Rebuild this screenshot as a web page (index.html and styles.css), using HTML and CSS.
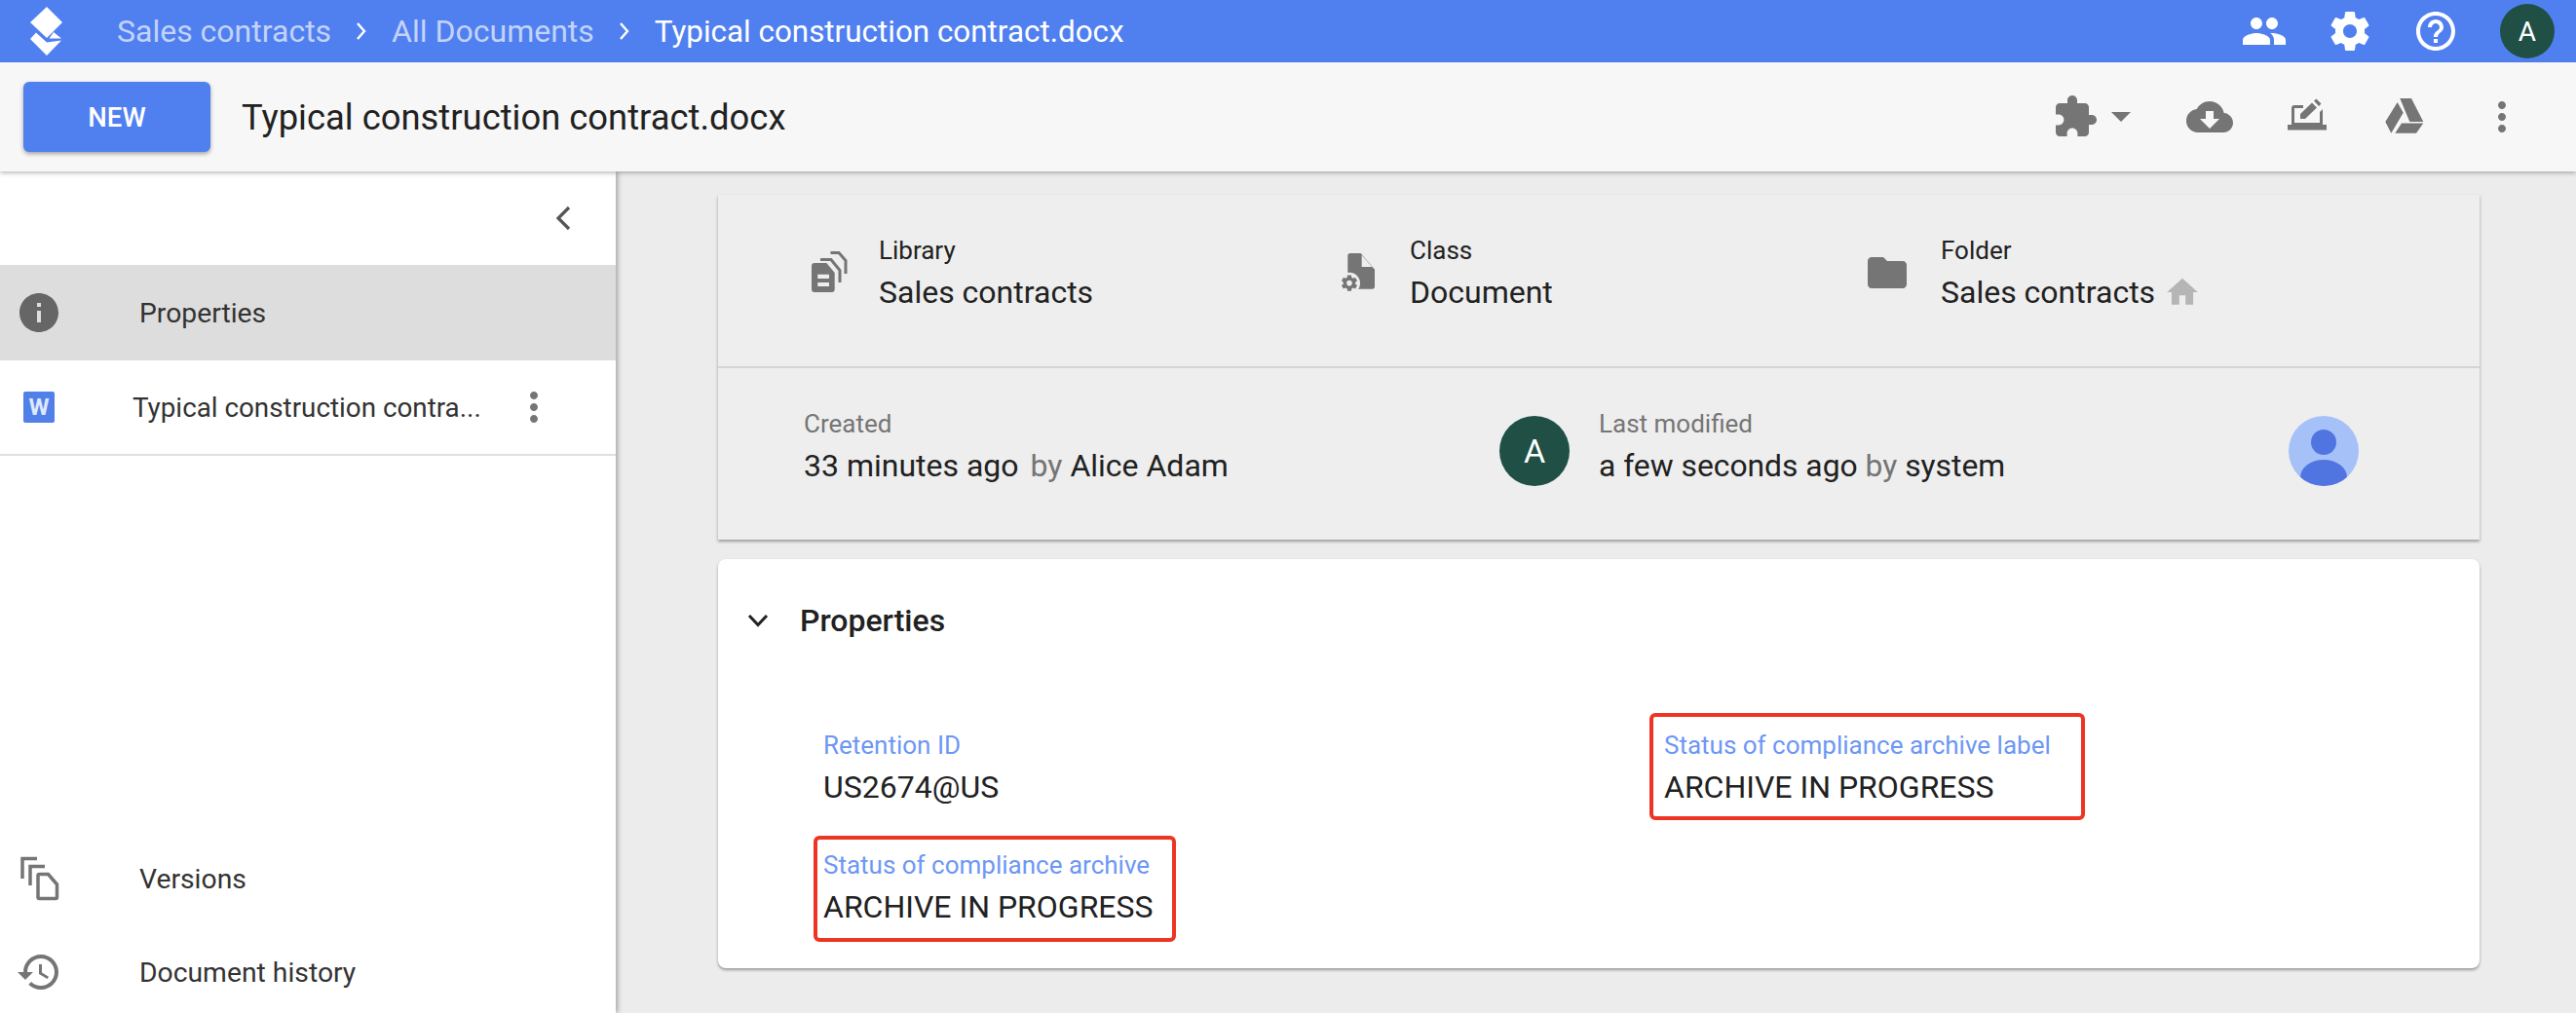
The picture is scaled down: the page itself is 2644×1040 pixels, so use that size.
FILE: index.html
```html
<!DOCTYPE html>
<html lang="en">
<head>
<meta charset="utf-8">
<title>Typical construction contract.docx</title>
<link rel="stylesheet" href="styles.css">
</head>
<body>
<header class="topbar">
  <svg class="logo" viewBox="0 0 34 50" width="34" height="50"><path d="M17 0L33 16 17 32 0 16z" fill="#fff"/><path d="M24 26L32 32.500H19.500z" fill="#fff"/><path d="M0 33L6 26.500 17 36.500 32 34.500 17 50z" fill="#fff"/></svg>
  <nav class="crumbs">
    <span class="crumb dim">Sales contracts</span>
    <svg class="chev" viewBox="0 0 12 20" width="12" height="20"><path d="M2 2l7 8-7 8" fill="none" stroke="#fff" stroke-width="2.400"/></svg>
    <span class="crumb dim">All Documents</span>
    <svg class="chev" viewBox="0 0 12 20" width="12" height="20"><path d="M2 2l7 8-7 8" fill="none" stroke="#fff" stroke-width="2.400"/></svg>
    <span class="crumb current">Typical construction contract.docx</span>
  </nav>
  <div class="top-actions">
    <svg class="ico48 white" viewBox="0 0 24 24"><path d="M16 11c1.660 0 2.990-1.340 2.990-3S17.660 5 16 5c-1.660 0-3 1.340-3 3s1.340 3 3 3zm-8 0c1.660 0 2.990-1.340 2.990-3S9.660 5 8 5C6.340 5 5 6.340 5 8s1.340 3 3 3zm0 2c-2.330 0-7 1.170-7 3.500V19h14v-2.500c0-2.330-4.670-3.500-7-3.500zm8 0c-.29 0-.62.02-.97.05 1.160.84 1.970 1.970 1.970 3.450V19h6v-2.500c0-2.330-4.670-3.500-7-3.500z"/></svg>
    <svg class="ico48 white" viewBox="0 0 24 24"><path d="M19.430 12.980c.04-.32.07-.64.07-.98s-.03-.66-.07-.98l2.110-1.650c.19-.15.24-.42.12-.64l-2-3.460c-.12-.22-.39-.3-.61-.22l-2.490 1c-.52-.4-1.080-.73-1.690-.98l-.38-2.650C14.460 2.180 14.250 2 14 2h-4c-.25 0-.46.18-.49.42l-.38 2.650c-.61.25-1.170.59-1.690.98l-2.490-1c-.23-.09-.49 0-.61.22l-2 3.460c-.13.22-.07.49.12.64l2.110 1.650c-.04.32-.07.65-.07.98s.03.66.07.98l-2.110 1.650c-.19.15-.24.42-.12.64l2 3.460c.12.22.39.3.61.22l2.490-1c.52.4 1.080.73 1.690.98l.38 2.650c.03.24.24.42.49.42h4c.25 0 .46-.18.49-.42l.38-2.650c.61-.25 1.170-.59 1.690-.98l2.490 1c.23.09.49 0 .61-.22l2-3.460c.12-.22.07-.49-.12-.64l-2.110-1.650zM12 15.500c-1.930 0-3.500-1.570-3.500-3.500s1.570-3.500 3.500-3.500 3.500 1.570 3.500 3.500-1.570 3.500-3.500 3.500z"/></svg>
    <svg class="ico48 white" viewBox="0 0 24 24"><path d="M11 18h2v-2h-2v2zm1-16C6.480 2 2 6.480 2 12s4.480 10 10 10 10-4.480 10-10S17.520 2 12 2zm0 18c-4.410 0-8-3.590-8-8s3.590-8 8-8 8 3.590 8 8-3.590 8-8 8zm0-14c-2.210 0-4 1.790-4 4h2c0-1.100.9-2 2-2s2 .9 2 2c0 2-3 1.750-3 5h2c0-2.250 3-2.500 3-5 0-2.210-1.790-4-4-4z"/></svg>
    <span class="avatar avatar-top">A</span>
  </div>
</header>

<section class="toolbar">
  <button class="new-btn">NEW</button>
  <h1 class="doc-title">Typical construction contract.docx</h1>
  <div class="tool-actions">
    <svg class="ico48 grey" viewBox="0 0 24 24"><path d="M20.500 11H19V7c0-1.100-.9-2-2-2h-4V3.500C13 2.120 11.880 1 10.500 1S8 2.120 8 3.500V5H4c-1.100 0-1.990.9-1.990 2v3.800H3.500c1.490 0 2.700 1.210 2.700 2.700s-1.210 2.700-2.700 2.700H2V20c0 1.100.9 2 2 2h3.800v-1.500c0-1.490 1.210-2.700 2.700-2.700 1.490 0 2.700 1.210 2.700 2.700V22H17c1.100 0 2-.9 2-2v-4h1.500c1.380 0 2.500-1.120 2.500-2.500S21.880 11 20.500 11z"/></svg>
    <span class="caret"></span>
    <svg class="ico48 grey cloud" viewBox="0 0 24 24"><path d="M19.350 10.040C18.670 6.590 15.640 4 12 4 9.110 4 6.600 5.640 5.350 8.040 2.340 8.360 0 10.910 0 14c0 3.310 2.690 6 6 6h13c2.760 0 5-2.240 5-5 0-2.640-2.050-4.780-4.650-4.960zM17 13l-5 5-5-5h3V9h4v4h3z"/></svg>
    <svg class="ico48 grey edit" viewBox="0 0 48 48"><path d="M4 32h40v5.500H4z"/><path d="M8 32V15q0-3 3-3h9v3H11v15h26V19l3-3v16z"/><path d="M17 26v-5L29 9.500l5 5L22 26zM31 7.500l2.500-2 5 5-2.500 2.500z"/></svg>
    <svg class="ico48 grey drive" viewBox="0 0 48 48"><path d="M19.300 5H31l12.300 24h-14zM16.700 9L4.300 29l6 11.700 12.400-21zM21 30.500h22.300L36 40.700H14.300z"/></svg>
    <svg class="ico48 grey more" viewBox="0 0 24 24"><path d="M12 8c1.100 0 2-.9 2-2s-.9-2-2-2-2 .9-2 2 .9 2 2 2zm0 2c-1.100 0-2 .9-2 2s.9 2 2 2 2-.9 2-2-.9-2-2-2zm0 6c-1.100 0-2 .9-2 2s.9 2 2 2 2-.9 2-2-.9-2-2-2z"/></svg>
  </div>
</section>

<div class="body-row">
  <aside class="sidebar">
    <div class="collapse-row">
      <svg class="collapse" viewBox="0 0 20 28" width="20" height="28"><path d="M17 3L6 14l11 11" fill="none" stroke="#555" stroke-width="3.200"/></svg>
    </div>
    <div class="side-item active">
      <svg class="ico48 side-ico dark" viewBox="0 0 24 24"><path d="M12 2C6.480 2 2 6.480 2 12s4.480 10 10 10 10-4.480 10-10S17.520 2 12 2zm1 15h-2v-6h2v6zm0-8h-2V7h2v2z"/></svg>
      <span class="side-label">Properties</span>
    </div>
    <div class="side-doc">
      <span class="word-ico">W</span>
      <span class="side-doc-name">Typical construction contra...</span>
      <svg class="ico48 grey doc-more" viewBox="0 0 24 24"><path d="M12 8c1.100 0 2-.9 2-2s-.9-2-2-2-2 .9-2 2 .9 2 2 2zm0 2c-1.100 0-2 .9-2 2s.9 2 2 2 2-.9 2-2-.9-2-2-2zm0 6c-1.100 0-2 .9-2 2s.9 2 2 2 2-.9 2-2-.9-2-2-2z"/></svg>
    </div>
    <div class="side-spacer"></div>
    <div class="side-item plain">
      <svg class="ico48 side-ico" viewBox="0 0 48 48"><g fill="none" stroke="#757575" stroke-width="3.500"><path d="M22 3.500H7V24"/><path d="M30 11.500H15V31"/><path d="M24.500 19.500h9l9 10.500v13q0 1.500-1.500 1.500H24.500q-1.500 0-1.500-1.500V21q0-1.500 1.500-1.500z"/></g></svg>
      <span class="side-label">Versions</span>
    </div>
    <div class="side-item plain">
      <svg class="ico48 side-ico grey" viewBox="0 0 24 24"><path d="M13 3c-4.970 0-9 4.030-9 9H1l3.890 3.890.07.14L9 12H6c0-3.870 3.130-7 7-7s7 3.130 7 7-3.130 7-7 7c-1.930 0-3.680-.79-4.940-2.060l-1.420 1.420C8.270 19.990 10.510 21 13 21c4.970 0 9-4.030 9-9s-4.030-9-9-9zm-1 5v5l4.280 2.540.72-1.210-3.500-2.080V8H12z"/></svg>
      <span class="side-label">Document history</span>
    </div>
  </aside>

  <main class="content">
    <section class="card summary">
      <div class="summary-top">
        <div class="meta meta-lib">
          <svg class="ico48 grey" viewBox="0 0 48 48"><path fill-rule="evenodd" d="M9 14H21.300L29.700 24V41q0 3-3 3H9q-3 0-3-3V17q0-3 3-3zM12.300 25.700V30H24V25.700zM12.300 34V38H24V34z"/><g fill="none" stroke="#757575" stroke-width="3"><path d="M15 10.500H26L35 21.500V34"/><path d="M25.500 3.500H34L41 11.500V25"/></g></svg>
          <div class="meta-text"><div class="meta-label">Library</div><div class="meta-value">Sales contracts</div></div>
        </div>
        <div class="meta meta-class">
          <svg class="ico48 grey" viewBox="0 0 48 48"><path d="M14 4H24.700L39 20.700V38q0 2.700-2.700 2.700H14q-2.700 0-2.700-2.700V6.700Q11.300 4 14 4z"/><path class="cut" d="M25.700 5.700V18H36.300z"/><circle class="cut" cx="13" cy="34.700" r="11"/><g transform="translate(3.200 24.900) scale(.816)"><path d="M19.430 12.980c.04-.32.07-.64.07-.98s-.03-.66-.07-.98l2.110-1.650c.19-.15.24-.42.12-.64l-2-3.460c-.12-.22-.39-.3-.61-.22l-2.490 1c-.52-.4-1.080-.73-1.690-.98l-.38-2.650C14.460 2.180 14.250 2 14 2h-4c-.25 0-.46.18-.49.42l-.38 2.650c-.61.25-1.170.59-1.690.98l-2.490-1c-.23-.09-.49 0-.61.22l-2 3.460c-.13.22-.07.49.12.64l2.110 1.650c-.04.32-.07.65-.07.98s.03.66.07.98l-2.110 1.650c-.19.15-.24.42-.12.64l2 3.460c.12.22.39.3.61.22l2.490-1c.52.4 1.080.73 1.690.98l.38 2.650c.03.24.24.42.49.42h4c.25 0 .46-.18.49-.42l.38-2.650c.61-.25 1.170-.59 1.690-.98l2.490 1c.23.09.49 0 .61-.22l2-3.460c.12-.22.07-.49-.12-.64l-2.110-1.650zM12 15.500c-1.930 0-3.500-1.570-3.500-3.500s1.570-3.500 3.500-3.500 3.500 1.570 3.500 3.500-1.570 3.500-3.500 3.500z"/></g></svg>
          <div class="meta-text"><div class="meta-label">Class</div><div class="meta-value">Document</div></div>
        </div>
        <div class="meta meta-folder">
          <svg class="ico48 grey" viewBox="0 0 24 24"><path d="M10 4H4c-1.100 0-1.990.9-1.990 2L2 18c0 1.100.9 2 2 2h16c1.100 0 2-.9 2-2V8c0-1.100-.9-2-2-2h-8l-2-2z"/></svg>
          <div class="meta-text"><div class="meta-label">Folder</div><div class="meta-value">Sales contracts<svg class="home" viewBox="0 0 24 24" width="38" height="38"><path d="M10 20v-6h4v6h5v-8h3L12 3 2 12h3v8z"/></svg></div></div>
        </div>
      </div>
      <div class="summary-bottom">
        <div class="stamp stamp-created">
          <div class="stamp-text"><div class="stamp-label">Created</div><div class="stamp-value">33 minutes ago <span class="by">by</span> Alice Adam</div></div>
          <span class="avatar avatar-mid">A</span>
        </div>
        <div class="stamp stamp-modified">
          <div class="stamp-text"><div class="stamp-label">Last modified</div><div class="stamp-value">a few seconds ago <span class="by">by</span> system</div></div>
          <svg class="sys-avatar" viewBox="0 0 72 72" width="72" height="72"><defs><clipPath id="c"><circle cx="36" cy="36" r="36"/></clipPath></defs><circle cx="36" cy="36" r="36" fill="#a6c1f8"/><g clip-path="url(#c)" fill="#5175e0"><circle cx="36" cy="27" r="13"/><ellipse cx="36" cy="63" rx="24" ry="18"/></g></svg>
        </div>
      </div>
    </section>

    <section class="card props">
      <div class="props-head">
        <svg class="props-chev" viewBox="0 0 24 16" width="24" height="16"><path d="M3 3l9 9.500L21 3" fill="none" stroke="#222" stroke-width="3"/></svg>
        <h2 class="props-title">Properties</h2>
      </div>
      <div class="fields">
        <div class="field"><div class="field-label">Retention ID</div><div class="field-value">US2674@US</div></div>
        <div class="field marked marked-b"><div class="field-label">Status of compliance archive label</div><div class="field-value">ARCHIVE IN PROGRESS</div></div>
        <div class="field marked marked-a"><div class="field-label">Status of compliance archive</div><div class="field-value">ARCHIVE IN PROGRESS</div></div>
      </div>
    </section>
  </main>
</div>
```
FILE: styles.css
```css
*, *::after { box-sizing: border-box; }
html, body { margin: 0; height: 1040px; overflow: hidden; }
body { font-family: Roboto, "Liberation Sans", sans-serif; background: #ececec; color: #212121; display: flex; flex-direction: column; }
h1, h2 { margin: 0; font-weight: 400; }

.topbar { height: 64px; flex: none; background: #5080f0; display: flex; align-items: center; padding-left: 31px; color: #fff; }
.logo { flex: none; }
.crumbs { display: flex; align-items: center; margin-left: 55px; font-size: 32px; }
.crumb { white-space: nowrap; }
.crumb.dim { color: #c3d3fa; }
.crumb.current { font-size: 31.4px; }
.chev { margin: 0 25px; }
.top-actions { margin-left: auto; display: flex; align-items: center; gap: 40px; padding-right: 22px; }
.top-actions .avatar { margin-left: 2px; }

.ico48 { width: 48px; height: 48px; flex: none; display: block; }
.white { fill: #fff; }
.grey { fill: #757575; }
.dark { fill: #666; }
.cut { fill: #eee; }

.avatar { border-radius: 50%; background: #1f4f45; color: #fff; display: flex; align-items: center; justify-content: center; flex: none; }
.avatar-top { width: 56px; height: 56px; font-size: 28px; }
.avatar-mid { width: 72px; height: 72px; font-size: 34px; }

.toolbar { height: 112px; flex: none; background: #f7f7f7; display: flex; align-items: center; padding-left: 24px; padding-right: 52px; box-shadow: 0 2px 4px rgba(0,0,0,.25); position: relative; z-index: 3; }
.new-btn { width: 192px; height: 72px; border: 0; border-radius: 6px; background: #5080f0; color: #fff; font: 500 27.5px Roboto, sans-serif; box-shadow: 0 2px 4px rgba(0,0,0,.35); }
.doc-title { font-size: 36.4px; margin-left: 32px; white-space: nowrap; }
.tool-actions { margin-left: auto; display: flex; align-items: center; }
.caret { width: 0; height: 0; border-left: 10px solid transparent; border-right: 10px solid transparent; border-top: 10px solid #757575; margin-left: 13px; }
.cloud { margin-left: 57px; }
.edit { margin-left: 52px; }
.drive { margin-left: 52px; }
.more { margin-left: 52px; }

.body-row { flex: none; height: 864px; display: flex; }
.sidebar { width: 632px; flex: none; background: #fff; box-shadow: 2px 0 5px rgba(0,0,0,.3); display: flex; flex-direction: column; position: relative; z-index: 2; }
.collapse-row { height: 96px; flex: none; display: flex; align-items: center; justify-content: flex-end; padding-right: 45px; }
.side-item { height: 98px; flex: none; display: flex; align-items: center; padding-left: 16px; }
.side-item.active { background: #ddd; }
.side-item.plain { height: 96px; }
.side-label { margin-left: 79px; font-size: 28.3px; color: #333; white-space: nowrap; }
.side-doc { height: 98px; flex: none; display: flex; align-items: center; border-bottom: 2px solid #e0e0e0; padding-left: 24px; }
.word-ico { width: 32px; height: 32px; border-radius: 2px; background: #5080e8; color: #dfe8ff; font-size: 24px; font-weight: 700; display: flex; align-items: center; justify-content: center; flex: none; }
.side-doc-name { margin-left: 80px; font-size: 27.8px; color: #333; white-space: nowrap; }
.doc-more { margin-left: auto; margin-right: 60px; }
.side-spacer { height: 386px; flex: none; }

.content { flex: 1; min-width: 0; padding: 24px 99px 0 105px; display: flex; flex-direction: column; gap: 20px; }
.card { box-shadow: 0 2px 3px rgba(0,0,0,.35); flex: none; }
.summary { height: 354px; background: #eee; display: flex; flex-direction: column; }
.summary-top { height: 178px; flex: none; border-bottom: 2px solid #d4d4d4; display: flex; align-items: flex-start; padding-top: 41px; padding-left: 90px; }
.summary-bottom { flex: 1; display: flex; padding: 41px 124px 0 88px; }
.meta { display: flex; gap: 27px; }
.meta svg.ico48 { margin-top: 15px; }
.meta-lib, .meta-class { width: 545px; }
.meta-folder { margin-left: -4px; gap: 31px; }
.meta-label { font-size: 26px; line-height: 32px; color: #212121; }
.meta-value { font-size: 32px; line-height: 42px; margin-top: 6px; display: flex; align-items: center; white-space: nowrap; }
.home { fill: #b5b5b5; margin-left: 9px; }
.stamp { display: flex; justify-content: space-between; align-items: flex-start; }
.stamp-created { width: 786px; }
.stamp-modified { flex: 1; margin-left: 30px; }
.stamp-label { font-size: 26px; line-height: 32px; color: #757575; }
.stamp-value { font-size: 32px; line-height: 42px; margin-top: 6px; white-space: nowrap; }
.by { color: #757575; }
.stamp-created .by { margin: 0 0 0 4px; }
.stamp-modified .stamp-value { font-size: 31.8px; }
.stamp .avatar-mid, .sys-avatar { margin-top: 8px; flex: none; }

.props { height: 420px; background: #fff; border-radius: 8px; padding: 0 24px 0 29px; }
.props-head { height: 126px; display: flex; align-items: center; }
.props-chev { flex: none; }
.props-title { font-size: 32px; font-weight: 500; margin-left: 31px; }
.fields { display: grid; grid-template-columns: 863px 1fr; row-gap: 23px; padding-left: 79px; margin-top: 49px; }
.field { position: relative; height: 100px; }
.field-label { font-size: 26px; line-height: 32px; color: #6d97f5; white-space: nowrap; }
.field-value { font-size: 32px; line-height: 42px; margin-top: 6px; white-space: nowrap; }
.marked::after { content: ""; position: absolute; border: 4px solid #ee3524; border-radius: 6px; }
.marked-a { grid-column: 1; grid-row: 2; }
.marked-a::after { left: -10px; top: -14px; width: 372px; height: 109px; }
.marked-b { grid-column: 2; grid-row: 1; }
.marked-b::after { left: -15px; top: -17px; width: 447px; height: 110px; }
```
